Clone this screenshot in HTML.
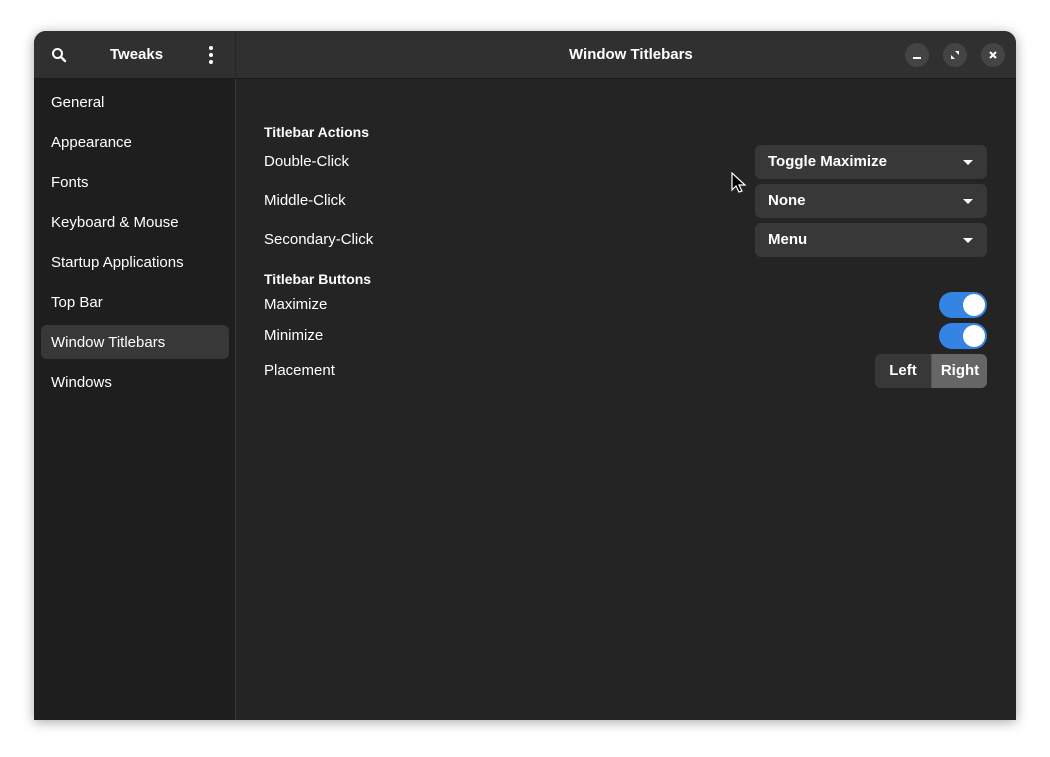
<!DOCTYPE html>
<html><head><style>
body{margin:0;width:1050px;height:757px;background:#fff;font-family:"Liberation Sans",sans-serif;font-size:15px;color:#fff;position:relative;overflow:hidden}
.win{position:absolute;left:34px;top:31px;width:982px;height:689px;background:#242424;border-radius:12px 12px 0 0;overflow:hidden;box-shadow:0 2px 12px rgba(0,0,0,.35)}
.hdr{position:absolute;left:0;top:0;width:982px;height:47px;background:#303030;border-bottom:1px solid #1c1c1c}
.side{position:absolute;left:0;top:48px;width:201px;height:641px;background:#1e1e1e;border-right:1px solid #3a3a3a}
.hsep{position:absolute;left:201px;top:0;width:1px;height:47px;background:#262626}
.a{position:absolute}
.row{position:absolute;left:17px;font-size:15px}
.sel{position:absolute;left:7px;top:246px;width:188px;height:34px;background:#383838;border-radius:6px}
.dd{position:absolute;left:721px;width:232px;height:34px;background:#383838;border-radius:6px;font-weight:bold;font-size:15px}
.dd span{position:absolute;left:13px;top:8px}
.dd i{position:absolute;right:14px;top:15px;border-left:5px solid transparent;border-right:5px solid transparent;border-top:5px solid #fff}
.tg{position:absolute;left:905px;width:48px;height:26px;background:#3584e4;border-radius:13px}
.tg b{position:absolute;right:2px;top:2px;width:22px;height:22px;background:#fff;border-radius:50%}
.cb{position:absolute;top:12px;width:24px;height:24px;border-radius:50%;background:#444}
</style></head><body>
<div class="win">
<div class="hdr">
<svg class="a" style="left:17px;top:16px" width="16" height="16" viewBox="0 0 16 16"><circle cx="6.5" cy="6.5" r="4.5" fill="none" stroke="#fff" stroke-width="2"/><path d="M10 10l4 4" stroke="#fff" stroke-width="2.4" stroke-linecap="round"/></svg>
<div class="a" style="left:76px;top:15px;font-weight:bold">Tweaks</div>
<svg class="a" style="left:174px;top:14px" width="6" height="20"><circle cx="3" cy="3" r="2" fill="#fff"/><circle cx="3" cy="10" r="2" fill="#fff"/><circle cx="3" cy="17" r="2" fill="#fff"/></svg>
<div class="hsep"></div>
<div class="a" style="left:535px;top:15px;font-weight:bold">Window Titlebars</div>
<div class="cb" style="left:871px"><div class="a" style="left:8px;top:14px;width:8px;height:2px;background:#fff"></div></div>
<div class="cb" style="left:909px"><svg class="a" style="left:7px;top:7px" width="10" height="10"><path d="M5 1h4v4zM5 9H1V5z" fill="#fff"/></svg></div>
<div class="cb" style="left:947px"><svg class="a" style="left:8px;top:8px" width="8" height="8"><path d="M1 1l6 6M7 1l-6 6" stroke="#fff" stroke-width="2"/></svg></div>
</div>
<div class="side">
<div class="sel"></div>
<div class="row" style="top:15px">General</div>
<div class="row" style="top:55px">Appearance</div>
<div class="row" style="top:95px">Fonts</div>
<div class="row" style="top:135px">Keyboard &amp; Mouse</div>
<div class="row" style="top:175px">Startup Applications</div>
<div class="row" style="top:215px">Top Bar</div>
<div class="row" style="top:255px">Window Titlebars</div>
<div class="row" style="top:295px">Windows</div>
</div>
<div class="a" style="left:230px;top:93px;font-weight:bold;font-size:14px">Titlebar Actions</div>
<div class="a" style="left:230px;top:122px">Double-Click</div>
<div class="a" style="left:230px;top:161px">Middle-Click</div>
<div class="a" style="left:230px;top:200px">Secondary-Click</div>
<div class="a" style="left:230px;top:240px;font-weight:bold;font-size:14px">Titlebar Buttons</div>
<div class="a" style="left:230px;top:265px">Maximize</div>
<div class="a" style="left:230px;top:296px">Minimize</div>
<div class="a" style="left:230px;top:331px">Placement</div>
<div class="dd" style="top:114px"><span>Toggle Maximize</span><i></i></div>
<div class="dd" style="top:153px"><span>None</span><i></i></div>
<div class="dd" style="top:192px"><span>Menu</span><i></i></div>
<div class="tg" style="top:261px"><b></b></div>
<div class="tg" style="top:292px"><b></b></div>
<div class="a" style="left:841px;top:323px;width:112px;height:34px;border-radius:6px;overflow:hidden;font-weight:bold">
<div class="a" style="left:0;top:0;width:56px;height:34px;background:#383838;text-align:center;line-height:34px">Left</div>
<div class="a" style="left:56px;top:0;width:56px;height:34px;background:#666;border-left:1px solid #555;text-align:center;line-height:34px">Right</div>
</div>
<svg class="a" style="left:697px;top:141px" width="16" height="22" viewBox="0 0 16 22"><path d="M1 1v17l4-4 3 6 3-1-3-6h6z" fill="#000" stroke="#fff" stroke-width="1.2"/></svg>
</div>
</body></html>
